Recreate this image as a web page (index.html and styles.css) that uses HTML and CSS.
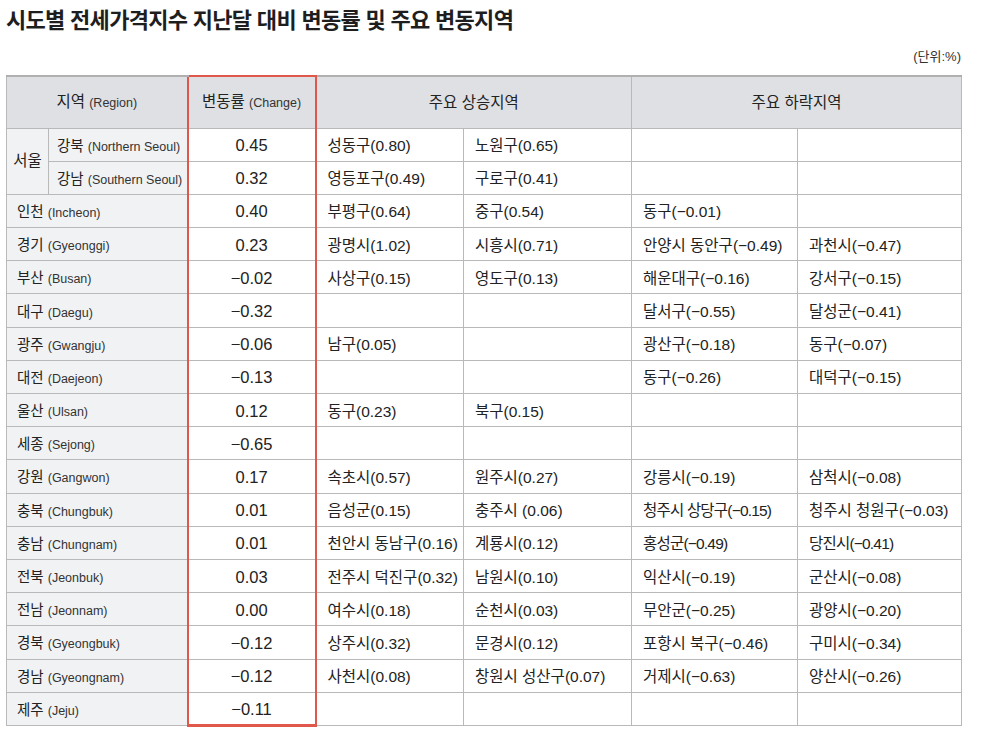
FILE: index.html
```html
<!DOCTYPE html>
<html lang="ko">
<head>
<meta charset="utf-8">
<title>시도별 전세가격지수 지난달 대비 변동률 및 주요 변동지역</title>
<link rel="stylesheet" href="styles.css">
</head>
<body>
<div class="page">
  <h1 class="title">시도별 전세가격지수 지난달 대비 변동률 및 주요 변동지역</h1>
  <div class="unit">(단위:%)</div>
  <table class="grid">
    <colgroup>
      <col class="c-a"><col class="c-b"><col class="c-chg"><col class="c-u1"><col class="c-u2"><col class="c-d1"><col class="c-d2">
    </colgroup>
    <thead>
      <tr class="head">
        <th colspan="2">지역 <span class="en">(Region)</span></th>
        <th class="chg">변동률 <span class="en">(Change)</span></th>
        <th colspan="2">주요 상승지역</th>
        <th colspan="2">주요 하락지역</th>
      </tr>
    </thead>
    <tbody>
      <tr><th rowspan="2" class="lbl seoul">서울</th><th class="lbl">강북 <span class="en">(Northern Seoul)</span></th><td class="chg">0.45</td><td>성동구(0.80)</td><td>노원구(0.65)</td><td></td><td></td></tr>
      <tr><th class="lbl">강남 <span class="en">(Southern Seoul)</span></th><td class="chg">0.32</td><td>영등포구(0.49)</td><td>구로구(0.41)</td><td></td><td></td></tr>
      <tr><th colspan="2" class="lbl">인천 <span class="en">(Incheon)</span></th><td class="chg">0.40</td><td>부평구(0.64)</td><td>중구(0.54)</td><td>동구(−0.01)</td><td></td></tr>
      <tr><th colspan="2" class="lbl">경기 <span class="en">(Gyeonggi)</span></th><td class="chg">0.23</td><td>광명시(1.02)</td><td>시흥시(0.71)</td><td>안양시 동안구(−0.49)</td><td>과천시(−0.47)</td></tr>
      <tr><th colspan="2" class="lbl">부산 <span class="en">(Busan)</span></th><td class="chg">−0.02</td><td>사상구(0.15)</td><td>영도구(0.13)</td><td>해운대구(−0.16)</td><td>강서구(−0.15)</td></tr>
      <tr><th colspan="2" class="lbl">대구 <span class="en">(Daegu)</span></th><td class="chg">−0.32</td><td></td><td></td><td>달서구(−0.55)</td><td>달성군(−0.41)</td></tr>
      <tr><th colspan="2" class="lbl">광주 <span class="en">(Gwangju)</span></th><td class="chg">−0.06</td><td>남구(0.05)</td><td></td><td>광산구(−0.18)</td><td>동구(−0.07)</td></tr>
      <tr><th colspan="2" class="lbl">대전 <span class="en">(Daejeon)</span></th><td class="chg">−0.13</td><td></td><td></td><td>동구(−0.26)</td><td>대덕구(−0.15)</td></tr>
      <tr><th colspan="2" class="lbl">울산 <span class="en">(Ulsan)</span></th><td class="chg">0.12</td><td>동구(0.23)</td><td>북구(0.15)</td><td></td><td></td></tr>
      <tr><th colspan="2" class="lbl">세종 <span class="en">(Sejong)</span></th><td class="chg">−0.65</td><td></td><td></td><td></td><td></td></tr>
      <tr><th colspan="2" class="lbl">강원 <span class="en">(Gangwon)</span></th><td class="chg">0.17</td><td>속초시(0.57)</td><td>원주시(0.27)</td><td>강릉시(−0.19)</td><td>삼척시(−0.08)</td></tr>
      <tr><th colspan="2" class="lbl">충북 <span class="en">(Chungbuk)</span></th><td class="chg">0.01</td><td>음성군(0.15)</td><td>충주시 (0.06)</td><td class="tight">청주시 상당구(−0.15)</td><td>청주시 청원구(−0.03)</td></tr>
      <tr><th colspan="2" class="lbl">충남 <span class="en">(Chungnam)</span></th><td class="chg">0.01</td><td>천안시 동남구(0.16)</td><td>계룡시(0.12)</td><td class="tight">홍성군(−0.49)</td><td class="tight">당진시(−0.41)</td></tr>
      <tr><th colspan="2" class="lbl">전북 <span class="en">(Jeonbuk)</span></th><td class="chg">0.03</td><td>전주시 덕진구(0.32)</td><td>남원시(0.10)</td><td>익산시(−0.19)</td><td>군산시(−0.08)</td></tr>
      <tr><th colspan="2" class="lbl">전남 <span class="en">(Jeonnam)</span></th><td class="chg">0.00</td><td>여수시(0.18)</td><td>순천시(0.03)</td><td>무안군(−0.25)</td><td>광양시(−0.20)</td></tr>
      <tr><th colspan="2" class="lbl">경북 <span class="en">(Gyeongbuk)</span></th><td class="chg">−0.12</td><td>상주시(0.32)</td><td>문경시(0.12)</td><td>포항시 북구(−0.46)</td><td>구미시(−0.34)</td></tr>
      <tr><th colspan="2" class="lbl">경남 <span class="en">(Gyeongnam)</span></th><td class="chg">−0.12</td><td>사천시(0.08)</td><td>창원시 성산구(0.07)</td><td>거제시(−0.63)</td><td>양산시(−0.26)</td></tr>
      <tr class="last"><th colspan="2" class="lbl">제주 <span class="en">(Jeju)</span></th><td class="chg">−0.11</td><td></td><td></td><td></td><td></td></tr>
    </tbody>
  </table>
</div>
</body>
</html>
```
FILE: styles.css
```css
html, body {
  margin: 0;
  padding: 0;
  background: #ffffff;
}

.page {
  padding: 4px 20px 0 6px;
  font-family: "Liberation Sans", "Noto Sans CJK KR", sans-serif;
  color: #222;
}

.title {
  margin: 0;
  font-family: "Noto Sans CJK KR", sans-serif;
  font-size: 22px;
  font-weight: 700;
  line-height: 28px;
  letter-spacing: -0.7px;
  color: #1e1e1e;
}

.unit {
  margin-top: 16px;
  width: 955px;
  text-align: right;
  font-size: 13px;
  line-height: 18px;
  color: #333;
}

.grid {
  margin-top: 9px;
  width: 955px;
  border-collapse: collapse;
  table-layout: fixed;
  font-size: 15.5px;
  line-height: 16px;
}

.c-a { width: 42px; }
.c-b { width: 139px; }
.c-chg { width: 128px; }
.c-u1 { width: 148px; }
.c-u2 { width: 168px; }
.c-d1 { width: 166px; }
.c-d2 { width: 164px; }

.grid th,
.grid td {
  border: 1px solid #b9b9b9;
  padding: 3px 0 0 11px;
  text-align: left;
  white-space: nowrap;
  overflow: visible;
  font-weight: 400;
  color: #222;
}

.grid .head {
  height: 52px;
}

.grid .head th {
  background: #dee0e4;
  text-align: center;
  padding: 1px 0 0 0;
  font-size: 15.5px;
  border-top: 2px solid #b0b0b0;
}

.grid .lbl {
  background: #f1f2f4;
  font-size: 14.5px;
  padding-left: 10px;
}

.grid .lbl.seoul {
  text-align: center;
  padding: 0;
  font-size: 15.5px;
}

.grid tbody tr:first-child .lbl:not(.seoul),
.grid tbody tr:nth-child(2) .lbl {
  padding-left: 8px;
}

.en {
  font-size: 12.5px;
  color: #333;
}

.grid .chg {
  border-left: 2px solid #e0584b;
  border-right: 2px solid #e0584b;
  text-align: center;
  padding: 1px 0 0 0;
  font-size: 16.5px;
  color: #222;
}

.grid .head th.chg {
  border-top: 2px solid #e0584b;
  font-size: 15.5px;
  padding: 1px 0 0 0;
}

.grid .last .chg {
  border-bottom: 3px solid #e0584b;
}

.grid tbody tr {
  height: 33.2px;
}

.grid .tight {
  letter-spacing: -0.8px;
}
```
